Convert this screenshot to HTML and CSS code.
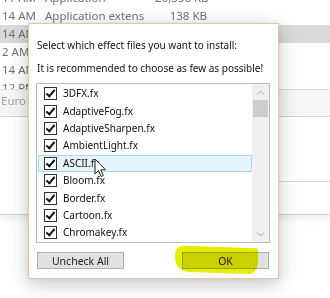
FILE: index.html
```html
<!DOCTYPE html>
<html lang="en">
<head>
    <meta charset="UTF-8">
    <title>Install effects</title>
    <link rel="stylesheet" href="styles.css">
</head>
<body>
    <div class="desk">
        <div class="files">
            <div class="row"><span class="time">11 AM</span><span class="type">Application</span><span class="size">26,356 KB</span></div>
            <div class="row"><span class="time">14 AM</span><span class="type">Application extens</span><span class="size">138 KB</span></div>
            <div class="row sel"><span class="time">14 AM</span><span class="type"></span><span class="size"></span></div>
            <div class="row"><span class="time">2 AM</span><span class="type"></span><span class="size"></span></div>
            <div class="row"><span class="time">14 AM</span><span class="type"></span><span class="size"></span></div>
            <div class="row"><span class="time">12 PM</span><span class="type"></span><span class="size"></span></div>
        </div>

        <div class="backwin">
            <div class="backwin-title">Euro Truck Simulator 2</div>
            <div class="backwin-rule"></div>
        </div>

        <div class="dialog">
            <p class="msg">Select which effect files you want to install:</p>
            <p class="msg">It is recommended to choose as few as possible!</p>
            <div class="list">
                <ul class="items">
                    <li><span class="check"></span>3DFX.fx</li>
                    <li><span class="check"></span>AdaptiveFog.fx</li>
                    <li><span class="check"></span>AdaptiveSharpen.fx</li>
                    <li><span class="check"></span>AmbientLight.fx</li>
                    <li class="hover"><span class="check"></span>ASCII.fx</li>
                    <li><span class="check"></span>Bloom.fx</li>
                    <li><span class="check"></span>Border.fx</li>
                    <li><span class="check"></span>Cartoon.fx</li>
                    <li><span class="check"></span>Chromakey.fx</li>
                </ul>
                <div class="scroll">
                    <svg class="arrow" width="17" height="12" viewBox="0 0 17 12"><path d="M5 7.5 L8.5 4 L12 7.5" fill="none" stroke="#a0a0a0" stroke-width="1"/></svg>
                    <div class="thumb"></div>
                    <div class="track"></div>
                    <svg class="arrow" width="17" height="12" viewBox="0 0 17 12"><path d="M5 4.5 L8.5 8 L12 4.5" fill="none" stroke="#a0a0a0" stroke-width="1"/></svg>
                </div>
            </div>
            <div class="buttons">
                <button class="btn">Uncheck All</button>
                <button class="btn">OK</button>
                <span class="marker"></span>
            </div>
        </div>

        <svg class="cursor" width="13" height="20" viewBox="0 0 13 20">
            <path d="M1 1 L1 16 L4.5 12.5 L7 18.5 L9.2 17.6 L6.8 11.8 L11.5 11.8 Z" fill="#fff" stroke="#222" stroke-width="1" stroke-linejoin="round"/>
        </svg>
    </div>
</body>
</html>
```

FILE: styles.css
```css
body {
    margin: 0;
    background: #fff;
    font-family: "Noto Sans", "Open Sans", sans-serif;
    font-size: 10px;
}
.desk {
    width: 330px;
    height: 298px;
    position: relative;
    overflow: hidden;
    background: #fff;
}

/* explorer rows behind everything */
.files {
    position: absolute;
    top: -11px;
    left: 0;
    width: 330px;
    color: #707070;
    font-size: 11.5px;
}
.row {
    display: flex;
    height: 18px;
    line-height: 18px;
}
.row.sel {
    background: #d9d9d9;
}
.time {
    width: 43px;
    padding-left: 2px;
    white-space: nowrap;
}
.type {
    width: 110px;
    white-space: nowrap;
}
.size {
    width: 52px;
    text-align: right;
    white-space: nowrap;
}

/* the other window behind the dialog */
.backwin {
    position: absolute;
    top: 89px;
    left: 0;
    width: 330px;
    height: 124px;
    background: #fff;
    border-top: 1px solid #dedede;
    border-bottom: 1px solid #d0d0d0;
    box-shadow: 0 4px 8px rgba(0,0,0,.08);
}
.backwin-title {
    height: 26px;
    line-height: 22px;
    padding-left: 1px;
    background: #f6f6f6;
    border-bottom: 1px solid #d2d2d2;
    color: #a0a0a0;
    font-size: 11.5px;
    white-space: nowrap;
}
.backwin-rule {
    margin: 64px 0 0 200px;
    border-top: 1px solid #d8d8d8;
}

/* dialog */
.dialog {
    position: absolute;
    top: 23px;
    left: 28px;
    width: 251px;
    height: 256px;
    background: #fff;
    border: 1px solid #e3c7a3;
    box-shadow: 0 5px 18px rgba(0,0,0,.22), 0 0 4px rgba(0,0,0,.08);
    padding: 0 8px;
    box-sizing: border-box;
    color: #111;
}
.msg {
    margin: 0;
    height: 16px;
    line-height: 16px;
    white-space: nowrap;
}
.msg:first-child {
    margin-top: 13px;
}
.msg + .msg {
    margin-top: 7px;
}
.list {
    margin: 7px 0 0 -1px;
    width: 234px;
    height: 160px;
    border: 1px solid #bcbcbc;
    box-sizing: border-box;
    display: flex;
    overflow: hidden;
}
.items {
    list-style: none;
    margin: 0;
    padding: 1px 0 0 1px;
    flex: 1;
}
.items li {
    height: 17.4px;
    line-height: 17px;
    display: flex;
    align-items: center;
    padding-left: 5px;
    box-sizing: border-box;
    border: 1px solid transparent;
    white-space: nowrap;
}
.items li.hover {
    background: #e5f3fb;
    border-color: #a9d6f2;
}
.check {
    width: 13px;
    height: 13px;
    border: 1px solid #333;
    box-sizing: border-box;
    margin-right: 6px;
    position: relative;
    background: #fff;
}
.check::after {
    content: "";
    position: absolute;
    left: 3px;
    top: 0px;
    width: 3px;
    height: 7px;
    border: solid #111;
    border-width: 0 2px 2px 0;
    transform: rotate(40deg);
}
.scroll {
    width: 17px;
    display: flex;
    flex-direction: column;
    background: #f0f0f0;
}
.arrow {
    flex: none;
    margin-top: 3px;
}
.thumb {
    height: 17px;
    background: #cdcdcd;
    margin: 1px 1px 0 1px;
}
.track {
    flex: 1;
}
.scroll .arrow:last-child {
    margin: 0 0 2px 0;
}

/* buttons */
.buttons {
    margin-top: 9px;
    display: flex;
    justify-content: space-between;
    position: relative;
    width: 232px;
}
.btn {
    width: 87px;
    height: 17px;
    padding: 0;
    font: inherit;
    font-size: 10.5px;
    line-height: 14px;
    color: #222;
    background: #e1e1e1;
    border: 1px solid #adadad;
}
.marker {
    position: absolute;
    left: 138px;
    top: -5px;
    width: 83px;
    height: 26px;
    background: #e4ee00;
    border-radius: 8px 3px 10px 14px;
    transform: rotate(2deg);
    mix-blend-mode: multiply;
}

.cursor {
    position: absolute;
    left: 94px;
    top: 158px;
}
```
